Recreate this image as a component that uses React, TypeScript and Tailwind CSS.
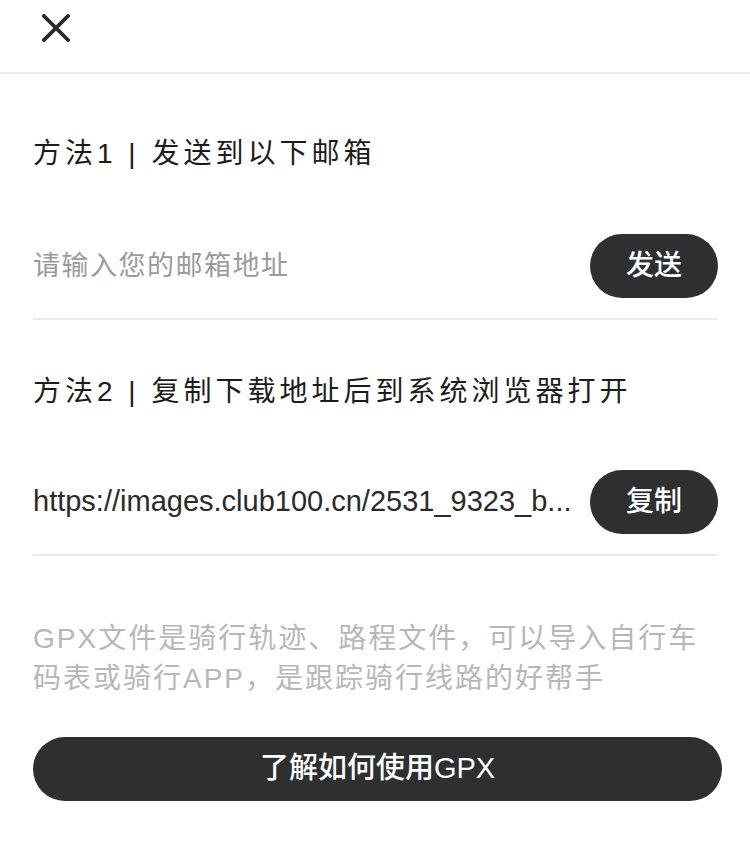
import React from 'react';

const font = { fontFamily: '"Liberation Sans", "Noto Sans CJK SC", sans-serif' };

const CloseIcon: React.FC = () => (
  <svg width="28" height="28" viewBox="0 0 28 28" fill="none">
    <path d="M2 2 L26 26 M26 2 L2 26" stroke="#2a2a2a" strokeWidth="3.8" strokeLinecap="square" />
  </svg>
);

const PillButton: React.FC<{ label: string }> = ({ label }) => (
  <button className="h-16 w-32 shrink-0 rounded-full bg-[#2d2f31] text-[28px] font-medium text-white">
    {label}
  </button>
);

export default function App() {
  return (
    <div className="min-h-[864px] w-[750px] bg-white" style={font}>
      {/* top bar */}
      <div className="h-[74px] border-b-2 border-[#ebebeb] pl-[42px] pt-[14px]">
        <CloseIcon />
      </div>

      <div className="pl-[33px] pr-[32px]">
        <h2 className="mt-[60px] text-[28px] font-normal leading-[40px] tracking-[4px] text-[#1c1c1c]">
          方法1 | 发送到以下邮箱
        </h2>
        <div className="mt-[60px] flex h-16 items-center justify-between">
          <input
            className="min-w-0 flex-1 bg-transparent text-[27px] tracking-[1.5px] text-[#333] outline-none placeholder:text-[#9a9a9a]"
            placeholder="请输入您的邮箱地址"
          />
          <PillButton label="发送" />
        </div>
        <div className="mt-5 h-[2px] bg-[#ebebeb]" />

        <h2 className="mt-[52px] text-[28px] font-normal leading-[40px] tracking-[4px] text-[#1c1c1c]">
          方法2 | 复制下载地址后到系统浏览器打开
        </h2>
        <div className="mt-[58px] flex h-16 items-center gap-[20px]">
          <span className="min-w-0 flex-1 overflow-hidden whitespace-nowrap text-[29px] text-[#2a2a2a]">
            https://images.club100.cn/2531_9323_b...
          </span>
          <PillButton label="复制" />
        </div>
        <div className="mt-5 h-[2px] bg-[#ebebeb]" />

        <p className="mt-[63px] text-[28px] leading-[40px] tracking-[2px] text-[#b7b7b7]">
          GPX文件是骑行轨迹、路程文件，可以导入自行车码表或骑行APP，是跟踪骑行线路的好帮手
        </p>
      </div>

      <div className="mt-[38px] pl-[33px] pr-[28px]">
        <button className="h-16 w-full rounded-full bg-[#2d2f31] text-[29px] font-medium text-white">
          了解如何使用GPX
        </button>
      </div>
    </div>
  );
}
